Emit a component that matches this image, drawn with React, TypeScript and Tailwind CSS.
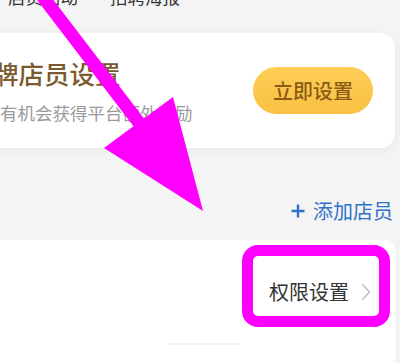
import React from "react";

export default function App() {
  return (
    <div
      className="relative w-[400px] h-[363px] overflow-hidden bg-[#f4f4f4]"
      style={{ fontFamily: '"Noto Sans CJK SC", "Noto Sans", sans-serif' }}
    >
      {/* tabs (clipped at top) */}
      <div className="mt-[-12px] flex h-[18px] items-center pl-[8px] gap-[32px] text-[17.5px] leading-[18px] text-[#333]">
        <span>店员活动</span>
        <span>招聘海报</span>
      </div>

      {/* promo card */}
      <div className="mt-[27px] ml-[-20px] flex h-[115px] w-[415px] items-center justify-between rounded-[14px] bg-white pl-[13px] pr-[22px] shadow-[0_2px_8px_rgba(0,0,0,0.06)]">
        <div className="flex flex-col">
          <div className="text-[25.5px] leading-[30px] font-medium text-[#7b5a2e] whitespace-nowrap">牌店员设置</div>
          <div className="mt-[14px] ml-[7px] text-[17.5px] leading-[22px] text-[#9a9a9a] whitespace-nowrap">
            有机会获得平台额外奖励
          </div>
        </div>
        <div className="flex h-[47px] w-[120px] items-center justify-center rounded-full bg-gradient-to-b from-[#fdcd55] to-[#f9c143] text-[20px] leading-[24px] font-medium text-[#8b5a14]">
          立即设置
        </div>
      </div>

      {/* add staff */}
      <div className="flex h-[92px] items-start justify-end pt-[51px] pr-[7px]">
        <div className="flex items-center gap-[8px] text-[20px] leading-[24px] text-[#2f72c8]">
          <svg width="14" height="14" viewBox="0 0 14 14">
            <path d="M7 0.5V13.5M0.5 7H13.5" stroke="#2f72c8" strokeWidth="2.4" />
          </svg>
          <span>添加店员</span>
        </div>
      </div>

      {/* staff list */}
      <div className="h-[130px] w-[397px] rounded-tr-[10px] border-r border-[#ececec] bg-white">
        <div className="flex h-[103px] items-center justify-end gap-[12px] pr-[25px]">
          <span className="text-[20px] leading-[24px] text-[#333]">权限设置</span>
          <svg width="10" height="18" viewBox="0 0 10 18">
            <path d="M1.5 1.5L8.5 9L1.5 16.5" fill="none" stroke="#bcbcbc" strokeWidth="1.5" />
          </svg>
        </div>
        <div className="ml-[170px] h-[2px] w-[70px] bg-[#f0f0f0]" />
      </div>

      {/* magenta highlight box */}
      <div className="absolute left-[242px] top-[245px] h-[82px] w-[148px] rounded-[16px] border-[11px] border-[#ff00ff]" />

      {/* magenta arrow */}
      <svg className="absolute left-0 top-0" width="400" height="363" viewBox="0 0 400 363">
        <line x1="30" y1="-20" x2="140" y2="124" stroke="#ff00ff" strokeWidth="13" />
        <polygon points="104,148 173,97 203,211" fill="#ff00ff" />
      </svg>
    </div>
  );
}
